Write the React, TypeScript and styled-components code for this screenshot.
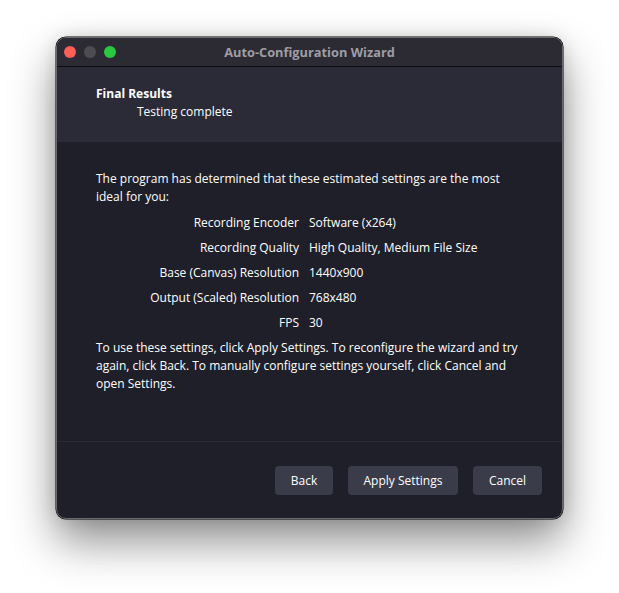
import { FC, Fragment } from "react";
import styled, { createGlobalStyle } from "styled-components";

const GlobalStyle = createGlobalStyle`
  html, body {
    margin: 0;
    padding: 0;
    background: #ffffff;
  }

  body {
    font-family: "Open Sans", "DejaVu Sans", sans-serif;
    -webkit-font-smoothing: antialiased;
  }
`;

const Page = styled.div`
  width: 619px;
  height: 593px;
  padding: 37px 0 0 56px;
  box-sizing: border-box;
`;

const Window = styled.div`
  width: 507px;
  height: 482px;
  box-sizing: border-box;
  border-radius: 10px;
  border: 1px solid #6b6a70;
  background: #1f1f29;
  overflow: hidden;
  display: flex;
  flex-direction: column;
  box-shadow: 0 0 0 0.5px #000, 0 22px 45px rgba(0, 0, 0, 0.45),
    0 0 18px rgba(0, 0, 0, 0.12);
`;

const TitleBar = styled.div`
  position: relative;
  height: 28px;
  flex: none;
  display: flex;
  align-items: center;
  justify-content: center;
  background: #2c2b33;
  border-bottom: 1px solid #0d0d10;
`;

const Lights = styled.div`
  position: absolute;
  left: 7px;
  top: 8px;
  display: flex;
  gap: 8px;
`;

const Light = styled.span<{ $color: string }>`
  width: 12px;
  height: 12px;
  border-radius: 50%;
  background: ${({ $color }) => $color};
`;

const Title = styled.div`
  font-size: 12.8px;
  font-weight: 700;
  color: #9e9da5;
`;

const Header = styled.header`
  flex: none;
  height: 75px;
  box-sizing: border-box;
  padding: 18px 39px 0;
  background: #2a2b37;
  color: #ffffff;
  font-size: 12px;
  line-height: 18px;
`;

const HeaderTitle = styled.div`
  font-weight: 700;
`;

const HeaderSub = styled.div`
  padding-left: 41px;
`;

const Body = styled.section`
  flex: none;
  height: 300px;
  box-sizing: border-box;
  padding: 28px 39px 0;
  color: #ffffff;
  font-size: 12px;
  line-height: 18px;
  border-bottom: 1px solid #2a2b36;
`;

const Paragraph = styled.p`
  margin: 0;
`;

const Form = styled.div`
  display: grid;
  grid-template-columns: 203px auto;
  column-gap: 10px;
  margin: 4px 0 4px;
`;

const Label = styled.div`
  text-align: right;
  line-height: 25px;
`;

const Value = styled.div`
  line-height: 25px;
`;

const Footer = styled.footer`
  flex: 1;
  display: flex;
  justify-content: flex-end;
  align-items: flex-start;
  gap: 15px;
  padding: 24px 20px 0 0;
`;

const Button = styled.button<{ $width: number }>`
  width: ${({ $width }) => $width}px;
  height: 29px;
  padding: 0;
  border: none;
  border-radius: 4px;
  background: #3b3c49;
  color: #ffffff;
  font-family: "Open Sans", "DejaVu Sans", sans-serif;
  font-size: 12px;
`;

const results: [string, string][] = [
  ["Recording Encoder", "Software (x264)"],
  ["Recording Quality", "High Quality, Medium File Size"],
  ["Base (Canvas) Resolution", "1440x900"],
  ["Output (Scaled) Resolution", "768x480"],
  ["FPS", "30"],
];

const App: FC = () => {
  return (
    <Page>
      <GlobalStyle />
      <Window>
        <TitleBar>
          <Lights>
            <Light $color="#fe5f57" />
            <Light $color="#4d4c53" />
            <Light $color="#28c840" />
          </Lights>
          <Title>Auto-Configuration Wizard</Title>
        </TitleBar>
        <Header>
          <HeaderTitle>Final Results</HeaderTitle>
          <HeaderSub>Testing complete</HeaderSub>
        </Header>
        <Body>
          <Paragraph>
            The program has determined that these estimated settings are the
            most ideal for you:
          </Paragraph>
          <Form>
            {results.map(([label, value]) => (
              <Fragment key={label}>
                <Label>{label}</Label>
                <Value>{value}</Value>
              </Fragment>
            ))}
          </Form>
          <Paragraph>
            To use these settings, click Apply Settings. To reconfigure the
            wizard and try again, click Back. To manually configure settings
            yourself, click Cancel and open Settings.
          </Paragraph>
        </Body>
        <Footer>
          <Button $width={58}>Back</Button>
          <Button $width={110}>Apply Settings</Button>
          <Button $width={69}>Cancel</Button>
        </Footer>
      </Window>
    </Page>
  );
};

export default App;
